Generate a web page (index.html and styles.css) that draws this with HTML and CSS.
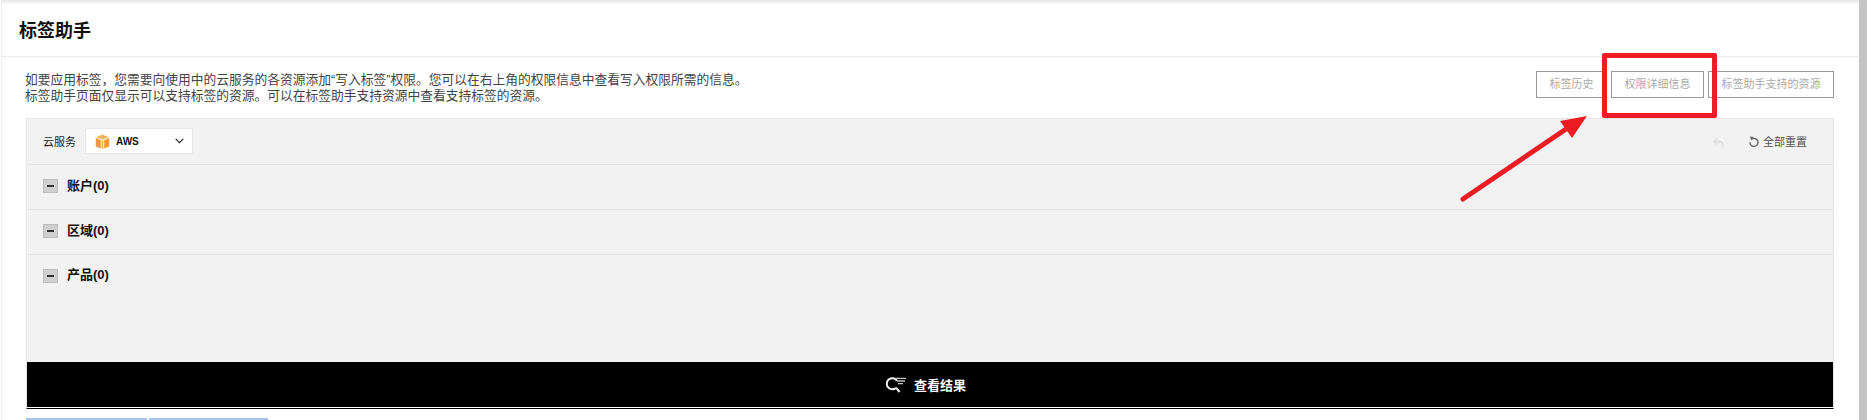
FILE: index.html
```html
<!DOCTYPE html>
<html lang="zh-CN">
<head>
  <meta charset="UTF-8">
  <meta name="viewport" content="width=device-width, initial-scale=1.0">
  <title>标签助手</title>
  <link rel="stylesheet" href="styles.css">
</head>
<body>
  <div class="page">
    <div class="content">
      <div class="title-bar">
        <h1>标签助手</h1>
      </div>

      <div class="intro">
        <p class="intro-text">如要应用标签，您需要向使用中的云服务的各资源添加“写入标签”权限。您可以在右上角的权限信息中查看写入权限所需的信息。<br>标签助手页面仅显示可以支持标签的资源。可以在标签助手支持资源中查看支持标签的资源。</p>
        <div class="intro-buttons">
          <button class="line-button">标签历史</button>
          <button class="line-button">权限详细信息</button>
          <button class="line-button">标签助手支持的资源</button>
        </div>
      </div>

      <div class="panel">
        <div class="panel-head">
          <span class="cloud-label">云服务</span>
          <div class="cloud-select">
            <svg class="aws-icon" viewBox="0 0 15 15">
              <path d="M1 3.2 7.5 0.4 14 3.2 7.5 5.6Z" fill="#f7b35c"/>
              <path d="M0.8 4 5.8 6V14.6L0.8 12.4Z" fill="#f09a2e"/>
              <path d="M14.2 4 9.2 6V14.6L14.2 12.4Z" fill="#f09a2e"/>
              <path d="M6.6 6.2H8.4V14.8H6.6Z" fill="#f7b35c"/>
            </svg>
            <span class="cloud-name">AWS</span>
            <svg class="chevron" viewBox="0 0 9 6">
              <path d="M0.7 0.8 4.5 4.6 8.3 0.8" fill="none" stroke="#222" stroke-width="1.2"/>
            </svg>
          </div>
          <div class="panel-actions">
            <svg class="undo-icon" viewBox="0 0 11 10">
              <path d="M4.4 0.6 0.8 3.6 4.4 6.4M1 3.6H6.6C8.8 3.6 10 5.2 10 9.4" fill="none" stroke="#dedede" stroke-width="1.6"/>
            </svg>
            <span class="reset">
              <svg class="reset-icon" viewBox="0 0 10 11">
                <path d="M2.6 3.2A4 4 0 1 1 1 6.2" fill="none" stroke="#666" stroke-width="1.4"/>
                <path d="M0.8 0.6 4.6 0.9 2.6 4.4Z" fill="#666"/>
              </svg>
              全部重置
            </span>
          </div>
        </div>

        <div class="filter-row"><span class="minus-box"></span>账户(0)</div>
        <div class="filter-row"><span class="minus-box"></span>区域(0)</div>
        <div class="filter-row last"><span class="minus-box"></span>产品(0)</div>

        <div class="result-bar">
          <svg class="result-icon" viewBox="0 0 20 16">
            <path d="M11 3.6A5.6 5.6 0 1 0 10 11" fill="none" stroke="#f2f2f2" stroke-width="2"/>
            <path d="M9 1.4H20M11 4H19M12 6.6H17" stroke="#c4c4c4" stroke-width="1.3"/>
            <path d="M10 10.6 13.6 15" stroke="#e6e6e6" stroke-width="2.2"/>
          </svg>
          查看结果
        </div>
      </div>

      <div class="chips">
        <span class="chip chip-a"></span>
        <span class="chip chip-b"></span>
      </div>
    </div>
    <div class="scrollbar"></div>

    <!-- red marks added on top of the screenshot -->
    <div class="mark-box"></div>
    <svg class="mark-arrow" viewBox="0 0 140 100">
      <path d="M3 85 112 11" stroke="#ed1c24" stroke-width="5" stroke-linecap="round"/>
      <path d="M127 2 100 7 112 24Z" fill="#ed1c24"/>
    </svg>
  </div>
</body>
</html>
```

FILE: styles.css
```css
* {
  box-sizing: border-box;
}
html, body {
  margin: 0;
  height: 100%;
  overflow: hidden;
  background-color: #fff;
}
body {
  font-family: "Liberation Sans", "Noto Sans CJK SC", sans-serif;
  font-size: 12px;
  color: #222;
}
.page {
  position: relative;
  display: flex;
  height: 420px;
  overflow: hidden;
}
.content {
  flex: 1;
  min-width: 0;
  margin-left: 1px;
  border-left: 1px solid #eee;
  background: linear-gradient(#e6e6e6, #fff 5px);
  padding-right: 25px;
}
.scrollbar {
  width: 8px;
  background-color: #c4c4c4;
}

/* title */
.title-bar {
  height: 57px;
  margin-right: -25px;
  padding: 19px 0 0 17px;
  border-bottom: 1px solid #ebebeb;
}
.title-bar h1 {
  margin: 0;
  font-size: 18px;
  line-height: 24px;
  font-weight: 700;
  color: #111;
}

/* intro text and buttons */
.intro {
  display: flex;
  justify-content: space-between;
  height: 61px;
  padding: 15px 0 0 23px;
}
.intro-text {
  margin: 0;
  font-size: 12.75px;
  line-height: 16px;
  color: #444;
}
.intro-buttons {
  display: flex;
  gap: 4px;
  margin-top: -1px;
}
.line-button {
  height: 27px;
  padding: 0 12.5px;
  border: 1px solid #999;
  background-color: #fff;
  color: #aaa;
  font-family: inherit;
  font-size: 11px;
  line-height: 25px;
}

/* filter panel */
.panel {
  margin-left: 24px;
  height: 291px;
  background-color: #f2f2f2;
  border: 1px solid #e6e6e6;
  border-bottom: 1px solid #000;
  display: flex;
  flex-direction: column;
}
.panel-head {
  display: flex;
  align-items: center;
  height: 46px;
  padding: 0 26px 1px 16px;
  border-bottom: 1px solid #e3e3e3;
}
.cloud-label {
  font-size: 11px;
  color: #222;
  margin-right: 9px;
}
.cloud-select {
  display: flex;
  align-items: center;
  width: 108px;
  height: 26px;
  padding: 0 8px 0 9px;
  background-color: #fff;
  border: 1px solid #e8e8e8;
}
.aws-icon {
  width: 15px;
  height: 15px;
}
.cloud-name {
  margin-left: 6px;
  font-size: 10px;
  font-weight: 700;
  color: #111;
}
.chevron {
  width: 9px;
  height: 6px;
  margin-left: auto;
}
.panel-actions {
  display: flex;
  align-items: center;
  margin-left: auto;
  gap: 25px;
}
.undo-icon {
  width: 11px;
  height: 10px;
  margin-top: 3px;
}
.reset {
  display: flex;
  align-items: center;
  gap: 4px;
  font-size: 11px;
  color: #555;
}
.reset-icon {
  width: 10px;
  height: 11px;
}

.filter-row {
  display: flex;
  align-items: center;
  height: 45px;
  padding: 0 0 2px 16px;
  border-bottom: 1px solid #e3e3e3;
  font-size: 13px;
  line-height: 18px;
  font-weight: 700;
  color: #111;
}
.filter-row.last {
  flex: 1;
  align-items: flex-start;
  padding-top: 11px;
  border-bottom: 0;
}
.minus-box {
  position: relative;
  width: 15px;
  height: 14px;
  margin-right: 9px;
  background-color: #d0d0d0;
  border: 1px solid #bdbdbd;
}
.filter-row.last .minus-box {
  margin-top: 3px;
}
.minus-box::after {
  content: "";
  position: absolute;
  left: 3px;
  right: 3px;
  top: 5px;
  height: 2px;
  background-color: #333;
}

/* black result bar */
.result-bar {
  display: flex;
  align-items: center;
  justify-content: center;
  gap: 8px;
  height: 46px;
  padding-right: 8px;
  background-color: #000;
  border-bottom: 1px solid #fff;
  color: #fff;
  font-size: 13px;
  font-weight: 700;
}
.result-icon {
  width: 20px;
  height: 16px;
}

.chips {
  display: flex;
  gap: 2px;
  margin: 9px 0 0 24px;
}
.chip {
  height: 2px;
  background-color: #a3c4f3;
}
.chip-a {
  width: 121px;
}
.chip-b {
  width: 119px;
}

/* annotations */
.mark-box {
  position: absolute;
  left: 1602px;
  top: 53px;
  width: 115px;
  height: 65px;
  border: 5px solid #ed1c24;
  border-radius: 2px;
}
.mark-arrow {
  position: absolute;
  left: 1460px;
  top: 114px;
  width: 140px;
  height: 100px;
}
```
